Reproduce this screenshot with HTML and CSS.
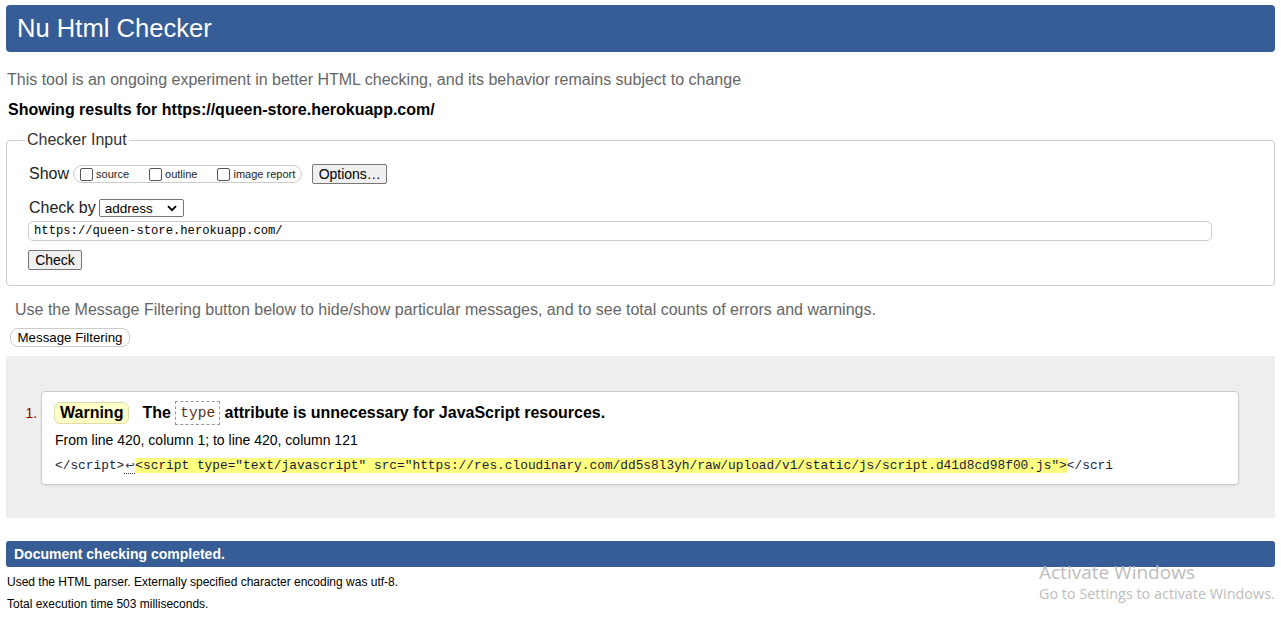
FILE: index.html
```html
<!DOCTYPE html>
<html lang="en">
<head>
<meta charset="utf-8">
<title>Showing results for https://queen-store.herokuapp.com/ - Nu Html Checker</title>
<link rel="stylesheet" href="styles.css">
</head>
<body>
<h1 class="title">Nu Html Checker</h1>
<p class="intro">This tool is an ongoing experiment in better HTML checking, and its behavior remains subject to change</p>
<p class="results">Showing results for https://queen-store.herokuapp.com/</p>

<fieldset class="checker">
  <legend class="legend">Checker Input</legend>
  <div class="row row-show">
    <span class="label">Show</span>
    <span class="opts">
      <label class="opt"><span class="cb"></span>source</label>
      <label class="opt"><span class="cb"></span>outline</label>
      <label class="opt"><span class="cb"></span>image report</label>
    </span>
    <span class="btn btn-options">Options…</span>
  </div>
  <div class="row row-by">
    <span class="label">Check by</span>
    <span class="select">
      <span class="select-text">address</span>
      <svg class="chev" width="10" height="7" viewBox="0 0 10 7"><path d="M1 1.2 L5 5.2 L9 1.2" fill="none" stroke="#000" stroke-width="1.8"/></svg>
    </span>
  </div>
  <div class="url">https://queen-store.herokuapp.com/</div>
  <span class="btn btn-check">Check</span>
</fieldset>

<p class="filter-note">Use the Message Filtering button below to hide/show particular messages, and to see total counts of errors and warnings.</p>
<span class="btn-filter">Message Filtering</span>

<div class="results-area">
  <ol class="messages">
    <li class="msg">
      <p class="msg-title"><span class="badge">Warning</span><span class="msg-text">The <code class="kw">type</code> attribute is unnecessary for JavaScript resources.</span></p>
      <p class="location">From line 420, column 1; to line 420, column 121</p>
      <p class="extract">&lt;/script&gt;<span class="lf">↩</span><mark class="hl">&lt;script type="text/javascript" src="https://res.cloudinary.com/dd5s8l3yh/raw/upload/v1/static/js/script.d41d8cd98f00.js"&gt;</mark>&lt;/scri</p>
    </li>
  </ol>
</div>

<p class="done">Document checking completed.</p>
<div class="stats">
  <p class="stat">Used the HTML parser. Externally specified character encoding was utf-8.</p>
  <p class="stat">Total execution time 503 milliseconds.</p>
</div>

<div class="watermark">
  <div class="wm-1">Activate Windows</div>
  <div class="wm-2">Go to Settings to activate Windows.</div>
</div>
</body>
</html>
```

FILE: styles.css
```css
html, body {
  margin: 0;
  background: #fff;
}
body {
  padding: 5px 6px 0;
  font-family: "Liberation Sans", Arial, sans-serif;
  color: #000;
  position: relative;
}
.title {
  margin: 0;
  height: 47px;
  line-height: 46px;
  padding-left: 11px;
  background: #365d95;
  color: #fff;
  font-size: 25.6px;
  font-weight: normal;
  border-radius: 4px;
}
.intro {
  margin: 18px 0 0 1px;
  font-size: 16px;
  line-height: 20px;
  color: #666;
}
.results {
  margin: 10px 0 0 2px;
  font-size: 16px;
  line-height: 20px;
  font-weight: bold;
  color: #000;
}
.checker {
  margin: 11px 0 0;
  border: 1px solid #ccc;
  border-radius: 4px;
  padding: 15px 0 15px 22px;
  min-inline-size: 0;
}
.legend {
  padding: 0 2px;
  margin-left: -4px;
  font-size: 16px;
  line-height: 18px;
  color: #333;
}
.row {
  display: flex;
  align-items: center;
  height: 20px;
}
.label {
  font-size: 16px;
  color: #222;
}
.opts {
  display: flex;
  align-items: center;
  height: 16px;
  margin-left: 4px;
  padding: 0 6px;
  border: 1px solid #ccc;
  border-radius: 9px;
  font-size: 11px;
  color: #222;
}
.opt {
  display: flex;
  align-items: center;
}
.opt + .opt {
  margin-left: 20px;
}
.cb {
  display: inline-block;
  width: 11px;
  height: 11px;
  border: 1px solid #555;
  border-radius: 2px;
  background: #fff;
  margin: 0 3px 0 0;
}
.btn {
  display: inline-flex;
  align-items: center;
  justify-content: center;
  box-sizing: border-box;
  height: 20px;
  border: 1px solid #767676;
  border-radius: 2px;
  background: #efefef;
  font-size: 14px;
  color: #000;
}
.btn-options {
  width: 75px;
  margin-left: 10px;
}
.row-by {
  margin-top: 14px;
}
.select {
  display: inline-flex;
  align-items: center;
  justify-content: space-between;
  box-sizing: border-box;
  width: 85px;
  height: 18px;
  margin-left: 3px;
  padding: 0 6px 0 5px;
  border: 1px solid #767676;
  border-radius: 2px;
  font-size: 13.5px;
  color: #000;
}
.chev {
  display: block;
}
.url {
  box-sizing: border-box;
  width: 1184px;
  height: 20px;
  margin: 3px 0 0 -1px;
  padding-left: 5px;
  border: 1px solid #ccc;
  border-radius: 5px;
  font-family: "Liberation Mono", "DejaVu Sans Mono", monospace;
  font-size: 12.2px;
  line-height: 18px;
  color: #000;
}
.btn-check {
  width: 54px;
  margin: 9px 0 0 -1px;
}
.filter-note {
  margin: 14px 0 0 9px;
  font-size: 16px;
  line-height: 20px;
  color: #666;
}
.btn-filter {
  display: inline-flex;
  align-items: center;
  justify-content: center;
  box-sizing: border-box;
  width: 120px;
  height: 19px;
  margin: 8px 0 0 4px;
  border: 1px solid #ccc;
  border-radius: 8px;
  background: #fff;
  font-size: 13.3px;
  color: #000;
}
.results-area {
  margin-top: 9px;
  background: #eee;
  padding: 35px 36px 33px 35px;
}
.messages {
  margin: 0;
  padding: 0;
}
.msg {
  box-sizing: border-box;
  height: 94px;
  padding: 9px 12px 0;
  background: #fff;
  border: 1px solid #ccc;
  border-radius: 4px;
  box-shadow: 0 1px 2px rgba(0, 0, 0, 0.08);
  font-size: 14px;
}
.msg::marker {
  color: #800;
  font-size: 14px;
}
.msg-title {
  margin: 0;
  display: flex;
  align-items: center;
  height: 24px;
  font-size: 16px;
  font-weight: bold;
}
.badge {
  display: inline-flex;
  align-items: center;
  height: 22px;
  box-sizing: border-box;
  padding: 0 5px;
  border: 1px solid #e2dca6;
  border-radius: 6px;
  background: #ffffc8;
}
.msg-text {
  margin-left: 13px;
  display: inline-flex;
  align-items: center;
  white-space: pre;
}
.kw {
  display: inline-block;
  box-sizing: border-box;
  height: 24px;
  line-height: 22px;
  padding: 0 4px;
  border: 1px dashed #999;
  font-family: "Liberation Mono", "DejaVu Sans Mono", monospace;
  font-size: 14.5px;
  font-weight: normal;
  color: #5a3210;
}
.location {
  margin: 5px 0 0 1px;
  line-height: 20px;
  font-size: 14px;
  color: #000;
}
.extract {
  margin: 6px 0 0 1px;
  line-height: 20px;
  font-family: "Liberation Mono", "DejaVu Sans Mono", monospace;
  font-size: 12.83px;
  color: #1b1b3a;
  white-space: pre;
  overflow: hidden;
}
.lf {
  display: inline-block;
  width: 11px;
  line-height: 14px;
  text-align: center;
  border-bottom: 1px dotted #333;
  font-family: "DejaVu Sans", sans-serif;
  font-size: 11px;
  color: #335;
}
.hl {
  background: #ffff80;
  color: #1b1b3a;
}
.done {
  margin: 23px 0 0;
  height: 26px;
  line-height: 26px;
  padding-left: 8px;
  background: #365d95;
  color: #fff;
  font-weight: bold;
  font-size: 14px;
  border-radius: 3px;
}
.stats {
  margin-top: 4px;
}
.stat {
  margin: 0 0 0 1px;
  font-size: 12px;
  line-height: 22px;
  color: #000;
}
.watermark {
  position: absolute;
  left: 1039px;
  top: 561px;
  font-family: "Open Sans", "Noto Sans", sans-serif;
  color: #bdbdbd;
}
.wm-1 {
  font-size: 19px;
  line-height: 22px;
}
.wm-2 {
  font-size: 14.4px;
  line-height: 22px;
}
```
